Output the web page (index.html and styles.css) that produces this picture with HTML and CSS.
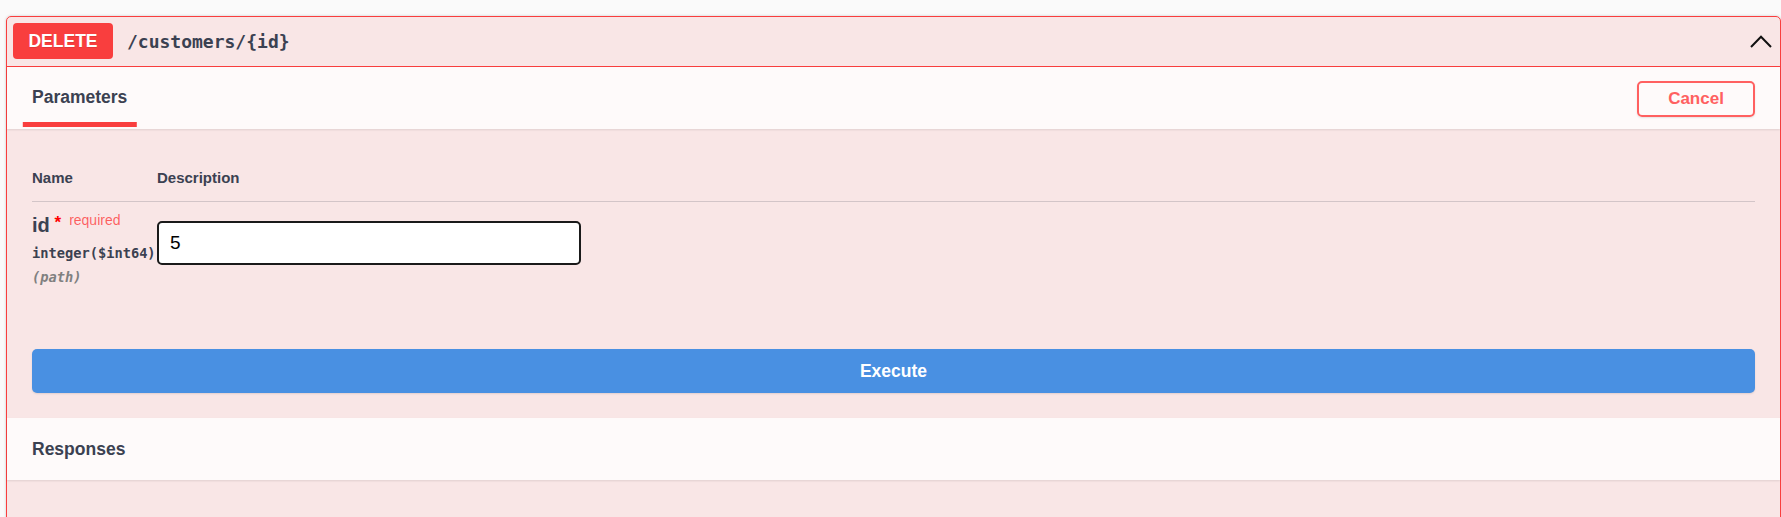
FILE: index.html
```html
<!DOCTYPE html>
<html lang="en">
<head>
<meta charset="utf-8">
<title>DELETE /customers/{id}</title>
<link rel="stylesheet" href="styles.css">
</head>
<body>
<div class="page">
  <div class="opblock">
    <div class="summary">
      <span class="method">DELETE</span>
      <span class="path">/customers/{id}</span>
      <svg class="arrow" width="22" height="13" viewBox="0 0 22 13" aria-hidden="true">
        <polyline points="1,12 11,1.8 21,12" fill="none" stroke="#111" stroke-width="2"/>
      </svg>
    </div>
    <div class="section-header">
      <div class="tab"><h4><span class="tab-label">Parameters</span></h4></div>
      <button class="btn-cancel" type="button">Cancel</button>
    </div>
    <div class="params">
      <div class="params-grid">
        <div class="th">Name</div>
        <div class="th">Description</div>
        <div class="td name-col">
          <div class="param-name">id<span class="star">&nbsp;*</span><span class="req">required</span></div>
          <div class="param-type">integer($int64)</div>
          <div class="param-in">(path)</div>
        </div>
        <div class="td desc-col">
          <input class="param-input" type="text" value="5">
        </div>
      </div>
    </div>
    <div class="execute-wrapper">
      <button class="btn-execute" type="button">Execute</button>
    </div>
    <div class="section-header responses">
      <h4>Responses</h4>
    </div>
    <div class="responses-body"></div>
  </div>
</div>
</body>
</html>
```

FILE: styles.css
```css
html, body {
  margin: 0;
  padding: 0;
  height: 100%;
  overflow: hidden;
  background: #fafafa;
}

.page {
  padding: 16px 0 0 6px;
  font-family: "Liberation Sans", Arial, sans-serif;
  color: #3b4151;
}

.opblock {
  border: 1px solid #f93e3e;
  border-radius: 5px;
  background: rgba(249, 62, 62, 0.1);
  box-shadow: 0 0 3px rgba(0, 0, 0, 0.19);
}

.summary {
  display: flex;
  align-items: center;
  padding: 6px 6px 7px 6px;
  border-bottom: 1px solid #f93e3e;
}

.method {
  display: flex;
  align-items: center;
  justify-content: center;
  min-width: 100px;
  height: 36px;
  background: #f93e3e;
  border-radius: 4px;
  color: #fff;
  font-size: 17.5px;
  font-weight: 700;
  text-shadow: 0 1px 0 rgba(0, 0, 0, 0.1);
}

.path {
  flex: 1;
  margin-left: 14px;
  font-family: "DejaVu Sans Mono", "Liberation Mono", monospace;
  font-size: 18px;
  font-weight: 700;
  color: #3b4151;
}

.arrow {
  display: block;
  margin-right: 2px;
  margin-top: 1px;
}

.section-header {
  display: flex;
  align-items: center;
  justify-content: space-between;
  height: 62px;
  padding: 0 25px;
  background: rgba(255, 255, 255, 0.8);
  box-shadow: 0 1px 2px rgba(0, 0, 0, 0.1);
}

.section-header h4 {
  margin: 0;
  font-size: 17.5px;
  font-weight: 700;
  color: #3b4151;
}

.tab h4 {
  margin-top: -2px;
}

.tab-label {
  position: relative;
}

.tab-label::after {
  content: "";
  position: absolute;
  left: 50%;
  transform: translateX(-50%);
  width: 120%;
  height: 5px;
  bottom: -20px;
  background: #f93e3e;
}

.btn-cancel {
  width: 118px;
  height: 36px;
  margin-top: 1px;
  border: 2px solid #ff6060;
  border-radius: 5px;
  background: transparent;
  color: #ff6060;
  font-family: "Liberation Sans", Arial, sans-serif;
  font-size: 17px;
  font-weight: 700;
  box-shadow: 0 1px 2px rgba(0, 0, 0, 0.1);
}

.params {
  padding: 25px 25px 26px 25px;
}

.params-grid {
  display: grid;
  grid-template-columns: 125px 1fr;
}

.th {
  padding: 15px 0 15px;
  font-size: 15px;
  line-height: 17px;
  font-weight: 700;
  border-bottom: 1px solid rgba(59, 65, 81, 0.2);
}

.td {
  padding: 12px 0 12px;
}

.param-name {
  font-size: 20px;
  line-height: 23px;
  font-weight: 700;
  white-space: nowrap;
}

.star {
  position: relative;
  top: -4px;
  color: red;
  font-size: 17px;
}

.req {
  position: relative;
  top: -7px;
  padding-left: 8px;
  font-size: 14px;
  font-weight: 400;
  color: rgba(255, 0, 0, 0.6);
}

.param-type {
  padding: 6px 0;
  font-family: "DejaVu Sans Mono", "Liberation Mono", monospace;
  font-size: 13.7px;
  line-height: 17px;
  font-weight: 700;
  white-space: nowrap;
}

.param-in {
  font-family: "DejaVu Sans Mono", "Liberation Mono", monospace;
  font-size: 13.7px;
  line-height: 18px;
  font-weight: 700;
  font-style: italic;
  color: #808080;
}

.desc-col {
  display: flex;
  align-items: flex-start;
}

.param-input {
  box-sizing: border-box;
  width: 424px;
  height: 44px;
  margin-top: 7px;
  padding: 0 11px;
  border: 2px solid #1a1a1a;
  border-radius: 5px;
  background: #fff;
  color: #000;
  font-family: "Liberation Sans", Arial, sans-serif;
  font-size: 19px;
  outline: none;
}

.execute-wrapper {
  padding: 25px 25px 25px 25px;
}

.btn-execute {
  display: block;
  width: 100%;
  height: 44px;
  border: 0;
  border-radius: 5px;
  background: #4990e2;
  color: #fff;
  font-family: "Liberation Sans", Arial, sans-serif;
  font-size: 17.5px;
  font-weight: 700;
  box-shadow: 0 1px 2px rgba(0, 0, 0, 0.1);
}

.responses-body {
  height: 120px;
}
```
